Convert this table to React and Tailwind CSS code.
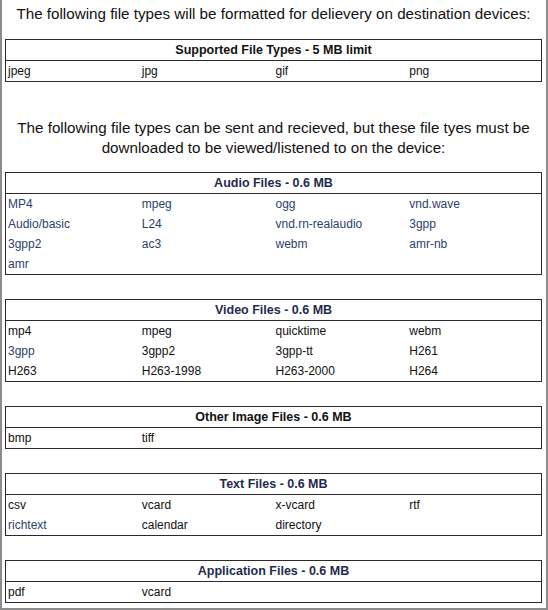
import React from "react";

const NAVY = "text-[#1f2b4d]";
const BLUE = "text-[#2c3f6b]";

function FileTable({ title, titleNavy, rows }) {
  return (
    <div className="border border-[#2a2a2a]">
      <div
        className={`h-[21px] leading-[21px] text-center font-bold text-[12.5px] border-b border-[#2a2a2a] ${
          titleNavy ? NAVY : "text-[#111]"
        }`}
      >
        {title}
      </div>
      {rows.map((row, i) => (
        <div key={i} className="grid grid-cols-4 h-[20px] leading-[20px] text-[12px]">
          {[0, 1, 2, 3].map((j) => {
            const cell = row[j];
            if (!cell) return <div key={j} />;
            const [text, blue] = Array.isArray(cell) ? cell : [cell, false];
            return (
              <div key={j} className={`pl-[2px] ${blue ? BLUE : "text-[#111]"}`}>
                {text}
              </div>
            );
          })}
        </div>
      ))}
    </div>
  );
}

const b = (t) => [t, true];

export default function App() {
  return (
    <div
      className="w-[548px] h-[610px] bg-white border-l-2 border-r-2 border-b-2 border-[#8c8c8c] pl-[3px] pr-[4px] overflow-hidden"
      style={{ fontFamily: '"Liberation Sans", Arial, sans-serif' }}
    >
      <p className="mt-[4px] text-center text-[15.2px] leading-[20px] text-[#111] whitespace-nowrap">
        The following file types will be formatted for delievery on destination devices:
      </p>
      <div className="mt-[15px]">
        <FileTable
          title="Supported File Types - 5 MB limit"
          rows={[["jpeg", "jpg", "gif", "png"]]}
        />
      </div>
      <p className="mt-[36px] text-center text-[15.2px] leading-[20px] text-[#111] whitespace-nowrap">
        The following file types can be sent and recieved, but these file tyes must be
        <br />
        downloaded to be viewed/listened to on the device:
      </p>
      <div className="mt-[14px] flex flex-col gap-[24px]">
        <FileTable
          title="Audio Files - 0.6 MB"
          titleNavy
          rows={[
            [b("MP4"), b("mpeg"), b("ogg"), b("vnd.wave")],
            [b("Audio/basic"), b("L24"), b("vnd.rn-realaudio"), b("3gpp")],
            [b("3gpp2"), b("ac3"), b("webm"), b("amr-nb")],
            [b("amr")],
          ]}
        />
        <FileTable
          title="Video Files - 0.6 MB"
          titleNavy
          rows={[
            ["mp4", "mpeg", "quicktime", "webm"],
            [b("3gpp"), "3gpp2", "3gpp-tt", "H261"],
            ["H263", "H263-1998", "H263-2000", "H264"],
          ]}
        />
        <FileTable title="Other Image Files - 0.6 MB" rows={[["bmp", "tiff"]]} />
        <FileTable
          title="Text Files - 0.6 MB"
          titleNavy
          rows={[
            ["csv", "vcard", "x-vcard", "rtf"],
            [b("richtext"), "calendar", "directory"],
          ]}
        />
        <FileTable
          title="Application Files - 0.6 MB"
          titleNavy
          rows={[["pdf", "vcard"]]}
        />
      </div>
    </div>
  );
}
